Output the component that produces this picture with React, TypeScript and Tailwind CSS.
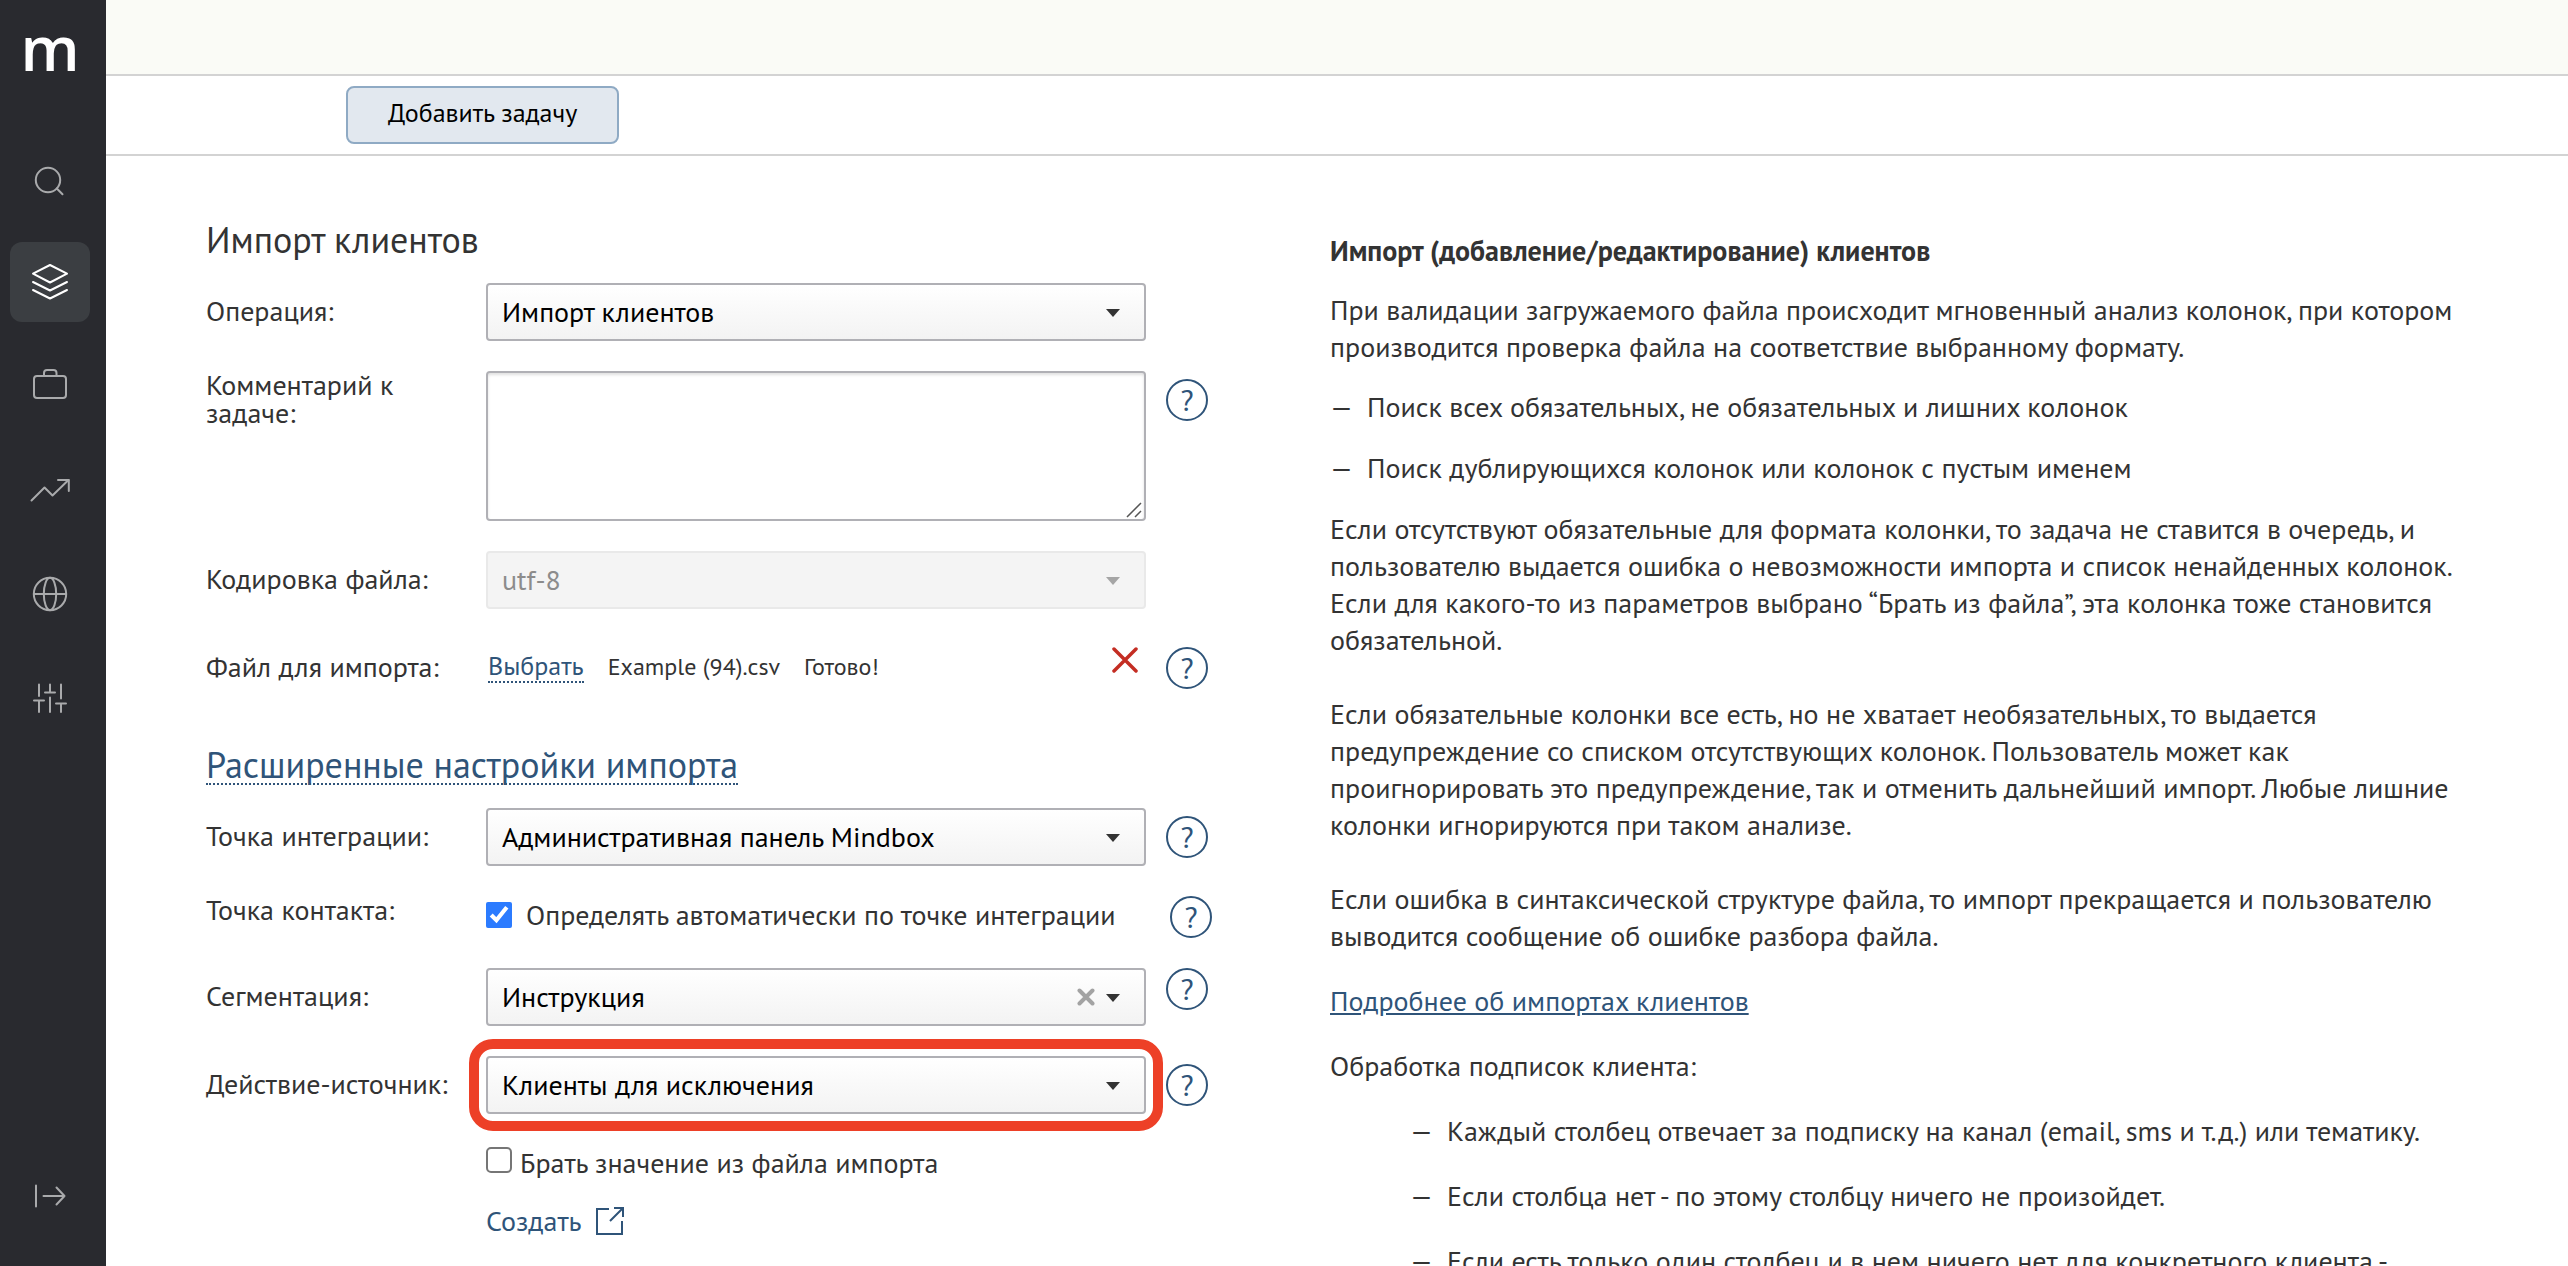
import React from 'react';
import clsx from 'clsx';

const navItems = [
  {
    label: 'Поиск',
    icon: (
      <>
        <circle cx="38" cy="42" r="12.2" />
        <path d="M46.8 50.5 52.5 56.2" />
      </>
    ),
  },
  {
    label: 'Данные',
    active: true,
    icon: (
      <>
        <path d="M40 23 57 31.7 40 40.5 23 31.7Z" />
        <path d="M23 40 40 48.5 57 40" />
        <path d="M23 48 40 56.5 57 48" />
      </>
    ),
  },
  {
    label: 'Кампании',
    icon: (
      <>
        <rect x="24" y="30" width="32" height="22" rx="3" />
        <path d="M34 30v-3a3 3 0 0 1 3-3h6.500a3 3 0 0 1 3 3v3" />
      </>
    ),
  },
  {
    label: 'Отчеты',
    icon: (
      <>
        <path d="M21.500 50.500 34.500 37.500 42.500 45.500 58.500 30" />
        <path d="M48 30h10.800v11" />
      </>
    ),
  },
  {
    label: 'Интеграции',
    icon: (
      <>
        <circle cx="40" cy="40" r="16.2" />
        <ellipse cx="40" cy="40" rx="6.200" ry="16.2" />
        <path d="M24 40h32" />
      </>
    ),
  },
  {
    label: 'Настройки',
    icon: (
      <>
        <path d="M29 26.500V38M24 42.500h10M29 42.500V54" />
        <path d="M40 26.500V34.500M35 34.500h10M40 39.500V54" />
        <path d="M51 26.500V40.500M46 45.500h10M51 45.500V54" />
      </>
    ),
  },
];

function NavButton({ label, active, children }: { label: string; active?: boolean; children: React.ReactNode }) {
  return (
    <button
      type="button"
      aria-label={label}
      className={clsx('size-20 rounded-xl', active ? 'bg-[#3b3e42] text-white' : 'text-[#a9aaac]')}
    >
      <svg viewBox="0 0 80 80" className="size-20" fill="none" stroke="currentColor" strokeWidth="2" strokeLinecap="round" strokeLinejoin="round">
        {children}
      </svg>
    </button>
  );
}

function Sidebar() {
  return (
    <aside className="flex w-[106px] shrink-0 flex-col bg-[#292a2f] px-2.5 pb-[30px]">
      <a href="#" className="flex h-[138px] w-20 shrink-0 justify-center font-['Open_Sans',sans-serif] text-[62px] leading-[94px] font-semibold text-white">
        m
      </a>
      <nav className="flex grow flex-col gap-6">
        {navItems.map((item) => (
          <NavButton key={item.label} label={item.label} active={item.active}>
            {item.icon}
          </NavButton>
        ))}
      </nav>
      <NavButton label="Развернуть меню">
        <path d="M26 29.500v21M33.500 40h21M46.500 31.500 54.500 40 46.500 48.500" />
      </NavButton>
    </aside>
  );
}

function Help({ className }: { className?: string }) {
  return (
    <button
      type="button"
      aria-label="Справка"
      className={clsx('flex size-[42px] shrink-0 items-center justify-center rounded-full border-2 border-[#2f5479] text-[30px] leading-none text-[#2f5479]', className)}
    >
      ?
    </button>
  );
}

interface RowProps {
  id: string;
  label: string;
  help?: string | boolean;
  top?: boolean;
  children: React.ReactNode;
}

function Row({ id, label, help, top, children }: RowProps) {
  return (
    <div className="flex items-start">
      <label htmlFor={id} className={clsx('w-[280px] shrink-0 leading-7', top ? 'pr-20' : 'pt-3.5')}>
        {label}
      </label>
      <div className="w-[660px] shrink-0">{children}</div>
      {help && <Help className={clsx('ml-5', help === true ? 'mt-2' : help)} />}
    </div>
  );
}

interface SelectProps {
  id: string;
  value: string;
  disabled?: boolean;
  clearable?: boolean;
}

function Select({ id, value, disabled, clearable }: SelectProps) {
  return (
    <div className="relative">
      <select
        id={id}
        disabled={disabled}
        className={clsx(
          'block h-[58px] w-full appearance-none rounded border-2 px-3.5 opacity-100',
          disabled ? 'border-[#e9e9e9] bg-[#f4f4f4] text-[#8c8c8c]' : 'border-[#b0b0b5] bg-linear-to-b from-white to-[#f3f3f3] text-black'
        )}
      >
        <option>{value}</option>
      </select>
      {clearable && (
        <button type="button" aria-label="Очистить" className="absolute top-5 right-[51px] text-[#a3a3a3]">
          <svg viewBox="0 0 18 18" className="size-[18px]" stroke="currentColor" strokeWidth="4" strokeLinecap="round">
            <path d="M2.500 2.500 15.500 15.500M15.500 2.500 2.500 15.500" />
          </svg>
        </button>
      )}
      <svg viewBox="0 0 14 8" className={clsx('pointer-events-none absolute top-[26px] right-[26px] h-2 w-3.5', disabled ? 'fill-[#a5a5a5]' : 'fill-[#333]')}>
        <path d="M0 0h14L7 8Z" />
      </svg>
    </div>
  );
}

function ImportForm() {
  return (
    <form className="w-[1004px] shrink-0 pt-[66px]">
      <h1 className="text-[36px] leading-9">Импорт клиентов</h1>
      <div className="mt-[25px] flex flex-col gap-[30px]">
        <Row id="operation" label="Операция:">
          <Select id="operation" value="Импорт клиентов" />
        </Row>
        <Row id="comment" label="Комментарий к задаче:" help top>
          <div className="relative">
            <textarea id="comment" className="block h-[150px] w-full resize-none rounded border-2 border-[#b0b0b5] px-3.5 py-2 shadow-[inset_0_2px_3px_rgba(0,0,0,0.12)]" />
            <svg viewBox="0 0 16 16" className="pointer-events-none absolute right-1 bottom-[3px] size-4" stroke="#555" strokeWidth="1.500">
              <path d="M1 15 15 1M9 15 15 9" />
            </svg>
          </div>
        </Row>
        <Row id="encoding" label="Кодировка файла:">
          <Select id="encoding" value="utf-8" disabled />
        </Row>
        <Row id="file" label="Файл для импорта:" help>
          <div className="flex h-[58px] items-start pt-2 pr-2 pl-0.5">
            <div className="flex grow items-baseline gap-6 pt-1 text-2xl">
              <button id="file" type="button" className="border-b-2 border-dotted border-[#2f5479] text-[26px] leading-[30px] text-[#2f5479]">
                Выбрать
              </button>
              <span>Example (94).csv</span>
              <span>Готово!</span>
            </div>
            <button type="button" aria-label="Удалить файл" className="text-[#c42d23]">
              <svg viewBox="0 0 26 26" className="size-[26px]" stroke="currentColor" strokeWidth="3.500" strokeLinecap="round">
                <path d="M2 2 24 24M24 2 2 24" />
              </svg>
            </button>
          </div>
        </Row>
      </div>
      <h2 className="mt-[50px] flex text-[36px] leading-9">
        <button type="button" className="border-b-2 border-dotted border-[#2f5479] text-[#2f5479]">
          Расширенные настройки импорта
        </button>
      </h2>
      <div className="mt-[23px] flex flex-col gap-[30px]">
        <Row id="integration" label="Точка интеграции:" help>
          <Select id="integration" value="Административная панель Mindbox" />
        </Row>
        <div className="flex items-start">
          <span className="w-[280px] shrink-0 leading-7">Точка контакта:</span>
          <label className="flex w-[660px] shrink-0 gap-3.5 pt-1.5 leading-[26px]">
            <input type="checkbox" defaultChecked className="size-[26px] accent-[#2b7bff]" />
            Определять автоматически по точке интеграции
          </label>
          <Help className="ml-6" />
        </div>
        <Row id="segmentation" label="Сегментация:" help="mt-0">
          <Select id="segmentation" value="Инструкция" clearable />
        </Row>
        <Row id="source" label="Действие-источник:" help>
          <div className="relative">
            <Select id="source" value="Клиенты для исключения" />
            <div className="pointer-events-none absolute -inset-[17px] rounded-3xl border-[10px] border-[#ed4027]" />
          </div>
        </Row>
        <div className="flex flex-col items-start gap-7 pl-[280px]">
          <label className="flex gap-2 pt-[3px] leading-8">
            <input type="checkbox" className="size-[26px] appearance-none rounded-[5px] border-2 border-[#767676] bg-white" />
            Брать значение из файла импорта
          </label>
          <a href="#" className="flex items-center gap-3.5 leading-7 text-[#2f5479]">
            Создать
            <svg viewBox="0 0 28 28" className="size-7" fill="none" stroke="currentColor" strokeWidth="2">
              <path d="M13 2H1v25h25V14M18 1h9v9M27 1 14 14" />
            </svg>
          </a>
        </div>
      </div>
    </form>
  );
}

function DashItem({ children }: { children: React.ReactNode }) {
  return (
    <li className="flex">
      <span className="w-[37px] shrink-0">—</span>
      <span>{children}</span>
    </li>
  );
}

function HelpText() {
  return (
    <article className="min-w-0 grow pt-[76px] pr-[106px] pl-[120px] leading-[37px]">
      <h2 className="font-bold">Импорт (добавление/редактирование) клиентов</h2>
      <p className="mt-[22px]">
        При валидации загружаемого файла происходит мгновенный анализ колонок, при котором производится проверка файла на
        соответствие выбранному формату.
      </p>
      <ul className="mt-[23px] mb-6 flex flex-col gap-6">
        <DashItem>Поиск всех обязательных, не обязательных и лишних колонок</DashItem>
        <DashItem>Поиск дублирующихся колонок или колонок с пустым именем</DashItem>
      </ul>
      <p>
        Если отсутствуют обязательные для формата колонки, то задача не ставится в очередь, и пользователю выдается ошибка о
        невозможности импорта и список ненайденных колонок. Если для какого-то из параметров выбрано “Брать из файла”, эта
        колонка тоже становится обязательной.
      </p>
      <p className="mt-[37px]">
        Если обязательные колонки все есть, но не хватает необязательных, то выдается предупреждение со списком отсутствующих
        колонок. Пользователь может как проигнорировать это предупреждение, так и отменить дальнейший импорт. Любые лишние
        колонки игнорируются при таком анализе.
      </p>
      <p className="mt-[37px]">
        Если ошибка в синтаксической структуре файла, то импорт прекращается и пользователю выводится сообщение об ошибке
        разбора файла.
      </p>
      <p className="mt-7">
        <a href="#" className="text-[#2f5479] underline">
          Подробнее об импортах клиентов
        </a>
      </p>
      <p className="mt-7">Обработка подписок клиента:</p>
      <ul className="mt-7 flex flex-col gap-7 pl-20">
        <DashItem>Каждый столбец отвечает за подписку на канал (email, sms и т.д.) или тематику.</DashItem>
        <DashItem>Если столбца нет - по этому столбцу ничего не произойдет.</DashItem>
        <DashItem>Если есть только один столбец и в нем ничего нет для конкретного клиента -</DashItem>
      </ul>
    </article>
  );
}

export default function App() {
  return (
    <div className="flex h-screen overflow-hidden bg-white font-['PT_Sans','Noto_Sans',sans-serif] text-[28px] text-[#333]">
      <Sidebar />
      <main className="flex min-w-0 grow flex-col">
        <header className="h-[76px] shrink-0 border-b-2 border-[#d3d3d3] bg-[#fafbf6]" />
        <div className="flex h-20 shrink-0 items-start border-b-2 border-[#d3d3d3] pt-2.5 pl-60">
          <button type="button" className="h-[58px] rounded-lg border-2 border-[#8faac4] bg-[#e2e8ef] px-10 pb-1.5 text-[26px] text-black">
            Добавить задачу
          </button>
        </div>
        <div className="flex grow items-start pl-[100px]">
          <ImportForm />
          <HelpText />
        </div>
      </main>
    </div>
  );
}
